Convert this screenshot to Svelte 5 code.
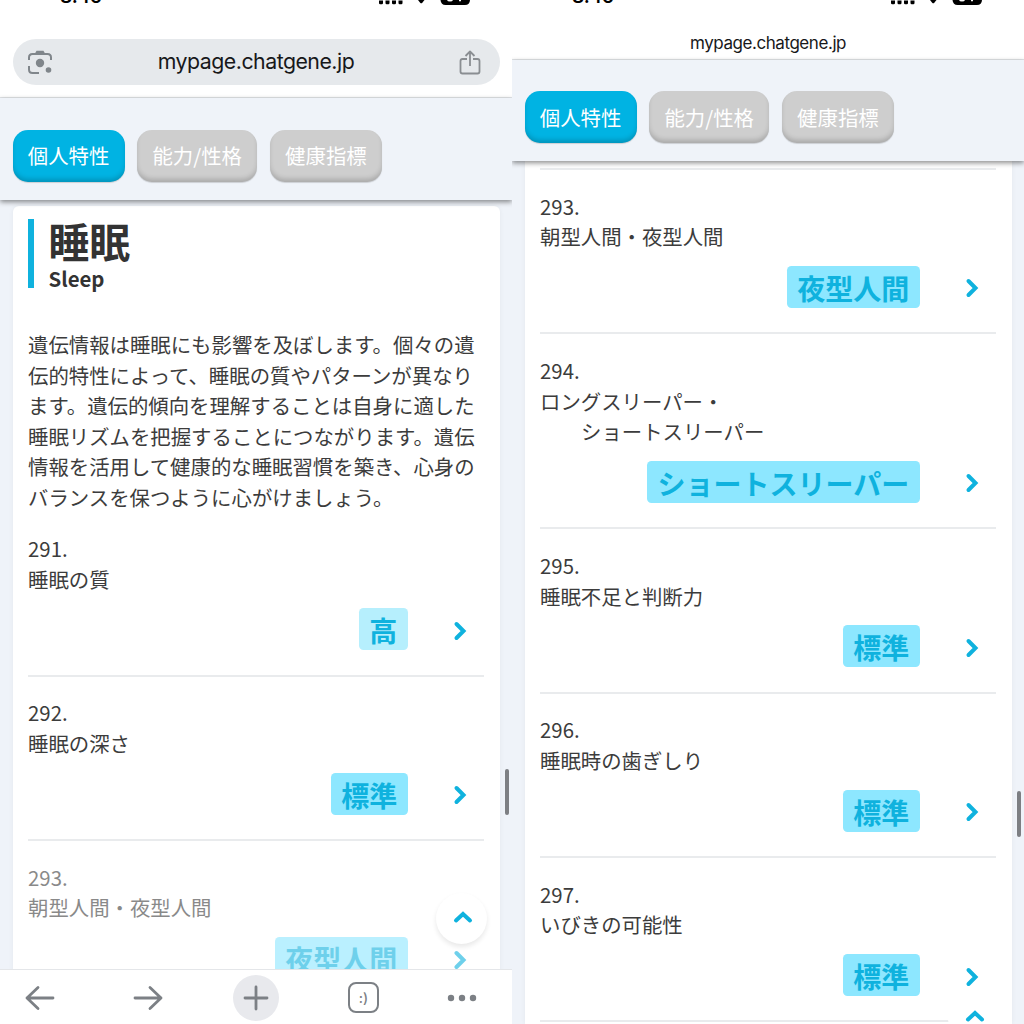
<script lang="ts">
    type Row = { no: number; name: string[]; result: string; light?: boolean; fading?: boolean };

    const tabs = ['個人特性', '能力/性格', '健康指標'];

    const leftRows: Row[] = [
        { no: 291, name: ['睡眠の質'], result: '高', light: true },
        { no: 292, name: ['睡眠の深さ'], result: '標準' },
        { no: 293, name: ['朝型人間・夜型人間'], result: '夜型人間', fading: true }
    ];

    const rightRows: Row[] = [
        { no: 293, name: ['朝型人間・夜型人間'], result: '夜型人間' },
        { no: 294, name: ['ロングスリーパー・', 'ショートスリーパー'], result: 'ショートスリーパー' },
        { no: 295, name: ['睡眠不足と判断力'], result: '標準' },
        { no: 296, name: ['睡眠時の歯ぎしり'], result: '標準' },
        { no: 297, name: ['いびきの可能性'], result: '標準' }
    ];
</script>

{#snippet statusBar()}
    <div class="status">
        <span class="time">8:46</span>
        <svg class="signals" width="94" height="6" viewBox="0 0 94 6">
            <path d="M1 .5h4v2.500q0 1.200-1.200 1.200h-1.600Q1 4.200 1 3zM7.500.5h4v2.500q0 1.200-1.200 1.200h-1.600q-1.200 0-1.200-1.200zM14 .5h4v2.500q0 1.200-1.200 1.200h-1.600Q14 4.200 14 3zM20.500.5h4v2.500q0 1.200-1.200 1.200h-1.600q-1.200 0-1.200-1.200z" />
            <path d="M40 0h6.500l-2.400 2.900q-.85.800-1.700 0z" />
            <path d="M62.500 0h29.500q-.3 5-5 5h-19.500q-4.500 0-5-5z" />
            <path d="M69 0h6q-.5 1.500-3 1.500t-3-1.500zM81 0h2v1.300h-2z" fill="#fff" />
        </svg>
    </div>
{/snippet}

{#snippet tabBar()}
    <nav class="tabs">
        {#each tabs as tab, i}
            <button class="tab" class:active={i === 0}>{tab}</button>
        {/each}
    </nav>
{/snippet}

{#snippet resultRow(row: Row)}
    <div class="row" class:fading={row.fading}>
        <div>{row.no}.</div>
        {#each row.name as line, i}
            <div class:indent={i > 0}>{line}</div>
        {/each}
        <div class="result">
            <span class="badge" class:light={row.light}>{row.result}</span>
            <svg class="chevron" width="14" height="20" viewBox="0 0 14 20">
                <path d="M3.500 3l7 7-7 7" />
            </svg>
        </div>
    </div>
{/snippet}

<div class="screens">
    <section class="phone">
        {@render statusBar()}
        <div class="address">
            <div class="pill">
                <svg width="26" height="26" viewBox="0 0 26 26" fill="none" stroke="#80868b" stroke-width="2">
                    <path d="M2 11V8.500Q2 5 5.500 5h15Q24 5 24 8.500V11M2 17v3.500Q2 24 5.500 24H12" />
                    <path d="M8 4.500L9.500 1.800h7L18 4.500z" fill="#80868b" stroke="none" />
                    <circle cx="13" cy="14" r="4.200" fill="#80868b" stroke="none" />
                    <circle cx="21.500" cy="21" r="2.800" fill="#80868b" stroke="none" />
                </svg>
                <span class="url">mypage.chatgene.jp</span>
                <svg width="24" height="26" viewBox="0 0 24 26" fill="none" stroke="#8a8e92" stroke-width="1.800" stroke-linejoin="round">
                    <path d="M9 10H4.500Q2.500 10 2.500 12v10.500q0 2 2 2h15q2 0 2-2V12q0-2-2-2H15M12 17V2.500M7.500 7L12 2.500 16.500 7" />
                </svg>
            </div>
        </div>
        {@render tabBar()}
        <main class="page">
            <article class="card first">
                <header class="title">
                    <h1>睡眠</h1>
                    <p>Sleep</p>
                </header>
                <p class="lead">遺伝情報は睡眠にも影響を及ぼします。個々の遺伝的特性によって、睡眠の質やパターンが異なります。遺伝的傾向を理解することは自身に適した睡眠リズムを把握することにつながります。遺伝情報を活用して健康的な睡眠習慣を築き、心身のバランスを保つように心がけましょう。</p>
                {#each leftRows as row}
                    {@render resultRow(row)}
                {/each}
            </article>
        </main>
        <footer class="toolbar">
            <svg width="30" height="26" viewBox="0 0 30 26"><path d="M28 13H2M13 2.500L2 13l11 10.500" /></svg>
            <svg width="30" height="26" viewBox="0 0 30 26"><path d="M2 13h26M17 2.500L28 13 17 23.500" /></svg>
            <span class="plus">
                <svg width="26" height="26" viewBox="0 0 26 26"><path d="M13 2v22M2 13h22" /></svg>
            </span>
            <span class="windows">:)</span>
            <svg width="30" height="8" viewBox="0 0 30 8">
                <g fill="#7c8085" stroke="none"><circle cx="4" cy="4" r="3.200" /><circle cx="15" cy="4" r="3.200" /><circle cx="26" cy="4" r="3.200" /></g>
            </svg>
        </footer>
        <button class="to-top" aria-label="Top">
            <svg width="20" height="14" viewBox="0 0 20 14"><path d="M3 10.500L10 4l7 6.500" /></svg>
        </button>
        <i class="scrollbar"></i>
    </section>

    <section class="phone compact">
        {@render statusBar()}
        <div class="address small"><span class="url">mypage.chatgene.jp</span></div>
        {@render tabBar()}
        <main class="page">
            <article class="card">
                {#each rightRows as row}
                    {@render resultRow(row)}
                {/each}
            </article>
        </main>
        <button class="to-top" aria-label="Top">
            <svg width="20" height="14" viewBox="0 0 20 14"><path d="M3 10.500L10 4l7 6.500" /></svg>
        </button>
        <i class="scrollbar"></i>
    </section>
</div>

<style>
    :global(body) { margin: 0; background: #fff; }
    .screens {
        display: flex;
        width: 1024px;
        height: 1024px;
        overflow: hidden;
        font-family: 'Noto Sans CJK JP', sans-serif;
        font-size: 20.4px;
        line-height: 30.6px;
        color: #3c3c3c;
    }
    .phone { position: relative; display: flex; flex-direction: column; width: 512px; height: 1024px; overflow: hidden; background: #fff; }
    h1, p { margin: 0; }
    button { border: 0; font: inherit; }

    .status { display: flex; justify-content: space-between; height: 20px; padding: 0 40px 0 60px; overflow: hidden; flex: none; }
    .time { margin-top: -17.500px; font: 600 19px/28px Inter, sans-serif; letter-spacing: -.4px; color: #000; }

    .address { flex: none; box-sizing: border-box; height: 78px; padding: 19px 12.500px 0; border-bottom: 1.500px solid #e2e5e8; }
    .pill { display: flex; align-items: center; justify-content: space-between; height: 46px; padding: 0 17px 0 14px; box-sizing: border-box; border-radius: 23px; background: #e6e9ec; }
    .url { font: 400 21.300px/28px Inter, sans-serif; letter-spacing: -.5px; color: #17181a; }
    .pill .url { margin: -2px 0 0 1px; }
    .address.small { height: 40px; padding: 8.500px 0 0; text-align: center; border-bottom: 1px solid #e2e5e8; }
    .small .url { display: block; font-size: 17px; letter-spacing: -.44px; }

    .tabs { position: relative; z-index: 1; flex: none; display: flex; gap: 12.500px; box-sizing: border-box; height: 102px; padding: 31.500px 12.500px 0; background: #eff3f9; box-shadow: 0 2px 5px rgba(0, 0, 0, .45); }
    .compact .tabs { height: 101px; padding-top: 31.400px; }
    .tab { height: 52px; padding: 0 15.300px 0; border-radius: 15px; background: #cecece; color: #fff; white-space: nowrap; box-shadow: inset 0 -4px 5px -1px rgba(0, 0, 0, .18), 0 1px 1px rgba(0, 0, 0, .15); }
    .tab.active { background: #00b3e3; }

    .page { flex: 1; min-height: 0; overflow: hidden; padding: 0 12.500px; background: #eff3f9; }
    .card { min-height: 100%; padding: 6px 15.500px 0; box-sizing: border-box; background: #fff; box-shadow: 0 0 5px rgba(0, 0, 0, .05); }
    .card.first { margin-top: 6px; padding-top: 13px; border-radius: 6px; }
    .compact .card { padding-top: 7px; }

    .title { height: 69px; padding-left: 14.500px; border-left: 6.500px solid #0fb2de; color: #333; }
    h1 { height: 46px; font-size: 40.800px; line-height: 43px; font-weight: 700; }
    .title p { font-weight: 600; line-height: 26px; }
    .lead { width: 450px; margin: 41px 0 20.400px; }

    .row { padding-top: 20.600px; }
    .row + .row, .compact .row { border-top: 2px solid #e9ebed; }
    .compact .row:last-child { border-bottom: 2px solid #e9ebed; }
    .lead + .row { padding-top: 0; }
    .row.fading > div { opacity: .6; }
    .indent { padding-left: 41px; }
    .result { display: flex; align-items: center; justify-content: flex-end; gap: 45.500px; padding: 14.200px 17px 24.400px 0; }
    .badge { height: 42px; padding: 0 10.200px; border-radius: 4.500px; background: #8de7ff; color: #0fb2de; font-size: 28px; line-height: 44px; font-weight: 700; }
    .badge.light { background: #b6effd; }
    .chevron { margin-top: 3px; }
    .chevron path, .to-top path { fill: none; stroke: #0fb2de; stroke-width: 4; stroke-linecap: round; }

    .toolbar { position: relative; z-index: 1; flex: none; display: flex; align-items: center; box-sizing: border-box; height: 55px; padding: 1px 0 0 25px; border-top: 1px solid #e4e6e9; background: #fff; }
    .toolbar svg { flex: none; fill: none; stroke: #7c8085; stroke-width: 2.800; stroke-linecap: round; stroke-linejoin: round; }
    .toolbar > svg + svg { margin-left: 78px; }
    .plus { display: flex; align-items: center; justify-content: center; width: 46px; height: 46px; margin: 0 69px 0 70px; border-radius: 50%; background: #e8e9ed; }
    .windows { width: 27px; height: 27px; margin-right: 68px; border: 2px solid #7c8085; border-radius: 8px; font: 500 14px/27px Inter, sans-serif; text-align: center; color: #7c8085; }

    .to-top { position: absolute; left: 436px; top: 893px; display: flex; align-items: center; justify-content: center; width: 51px; height: 51px; padding: 0 0 4px 2px; border-radius: 50%; background: #fff; box-shadow: 0 3px 5px rgba(0, 0, 0, .09); }
    .compact .to-top { top: 992px; box-shadow: none; }
    .scrollbar { position: absolute; z-index: 2; left: 504.500px; top: 769px; width: 4.500px; height: 46px; border-radius: 3px; background: #7d7f83; }
    .compact .scrollbar { top: 791px; }
</style>
